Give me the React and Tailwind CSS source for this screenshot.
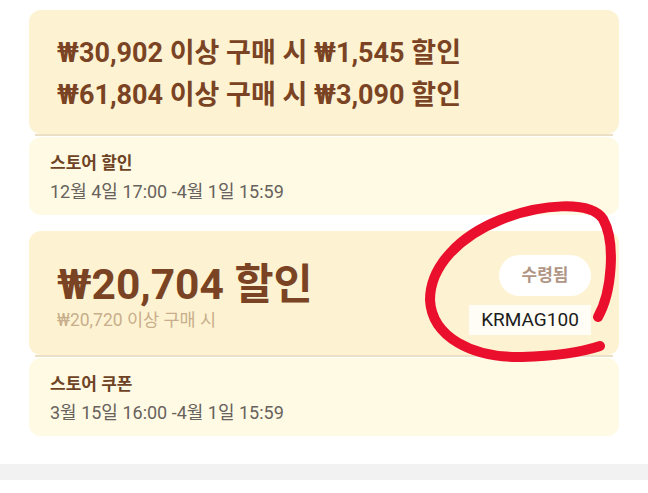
const FONT = { fontFamily: 'Roboto, "Noto Sans CJK KR", "Noto Sans", sans-serif' };

function Divider() {
  return <div className="mx-[6px] h-[2px] bg-[#ebe0c6]" />;
}

function Footer({ title, period }) {
  return (
    <div className="mt-px h-[78px] rounded-xl bg-[#fffae3] pl-[21px] pr-7 pt-[14px]">
      <div className="text-[17px] leading-[24px] font-bold text-[#6e4325]">{title}</div>
      <div className="mt-[5px] text-[18px] leading-[24px] text-[#67625d]">{period}</div>
    </div>
  );
}

export default function App() {
  return (
    <div className="relative w-[648px] h-[493px] bg-white overflow-hidden" style={FONT}>
      <div className="px-[29px] pt-[10px]">
        {/* 스토어 할인 */}
        <div>
          <div className="rounded-xl bg-[#fdf3d2] px-7 pt-[22px] h-[124px]">
            <div className="text-[27px] leading-[42px] font-bold text-[#7a4424]">
              ₩30,902 이상 구매 시 ₩1,545 할인
            </div>
            <div className="text-[27px] leading-[42px] font-bold text-[#7a4424]">
              ₩61,804 이상 구매 시 ₩3,090 할인
            </div>
          </div>
          <Divider />
          <Footer title="스토어 할인" period="12월 4일 17:00 -4월 1일 15:59" />
        </div>

        {/* 스토어 쿠폰 */}
        <div className="mt-[16px]">
          <div className="flex items-center justify-between rounded-xl bg-[#fdf3d2] px-7 h-[124px]">
            <div className="pt-[6px]">
              <div className="text-[42.5px] leading-[46px] font-bold text-[#7a4424]">₩20,704 할인</div>
              <div className="mt-[2px] text-[17.5px] leading-[20px] text-[#c8ae8c]">₩20,720 이상 구매 시</div>
            </div>
            <div className="flex flex-col items-end pt-[4px]">
              <div className="flex h-[41px] w-[92px] items-center justify-center rounded-full bg-white text-[17px] font-bold text-[#b09584]">
                수령됨
              </div>
              <div className="mt-[9px] flex h-[30px] w-[122px] items-center justify-center bg-[#fffdf6] text-[19px] text-[#1c1c1c]">
                KRMAG100
              </div>
            </div>
          </div>
          <Divider />
          <Footer title="스토어 쿠폰" period="3월 15일 16:00 -4월 1일 15:59" />
        </div>
      </div>

      <div className="mt-[28px] h-[16px] bg-[#f2f2f2]" />

      <svg className="absolute inset-0 pointer-events-none" width="648" height="493" viewBox="0 0 648 493">
        <path
          d="M598 317 C612 292 616 242 603 219 C590 200 540 204 500 220 C460 236 430 266 430 300 C432 337 472 358 522 357 C560 356 585 351 600 346"
          fill="none"
          stroke="#ea0f2c"
          strokeWidth="10"
          strokeLinecap="round"
          strokeLinejoin="round"
        />
      </svg>
    </div>
  );
}
